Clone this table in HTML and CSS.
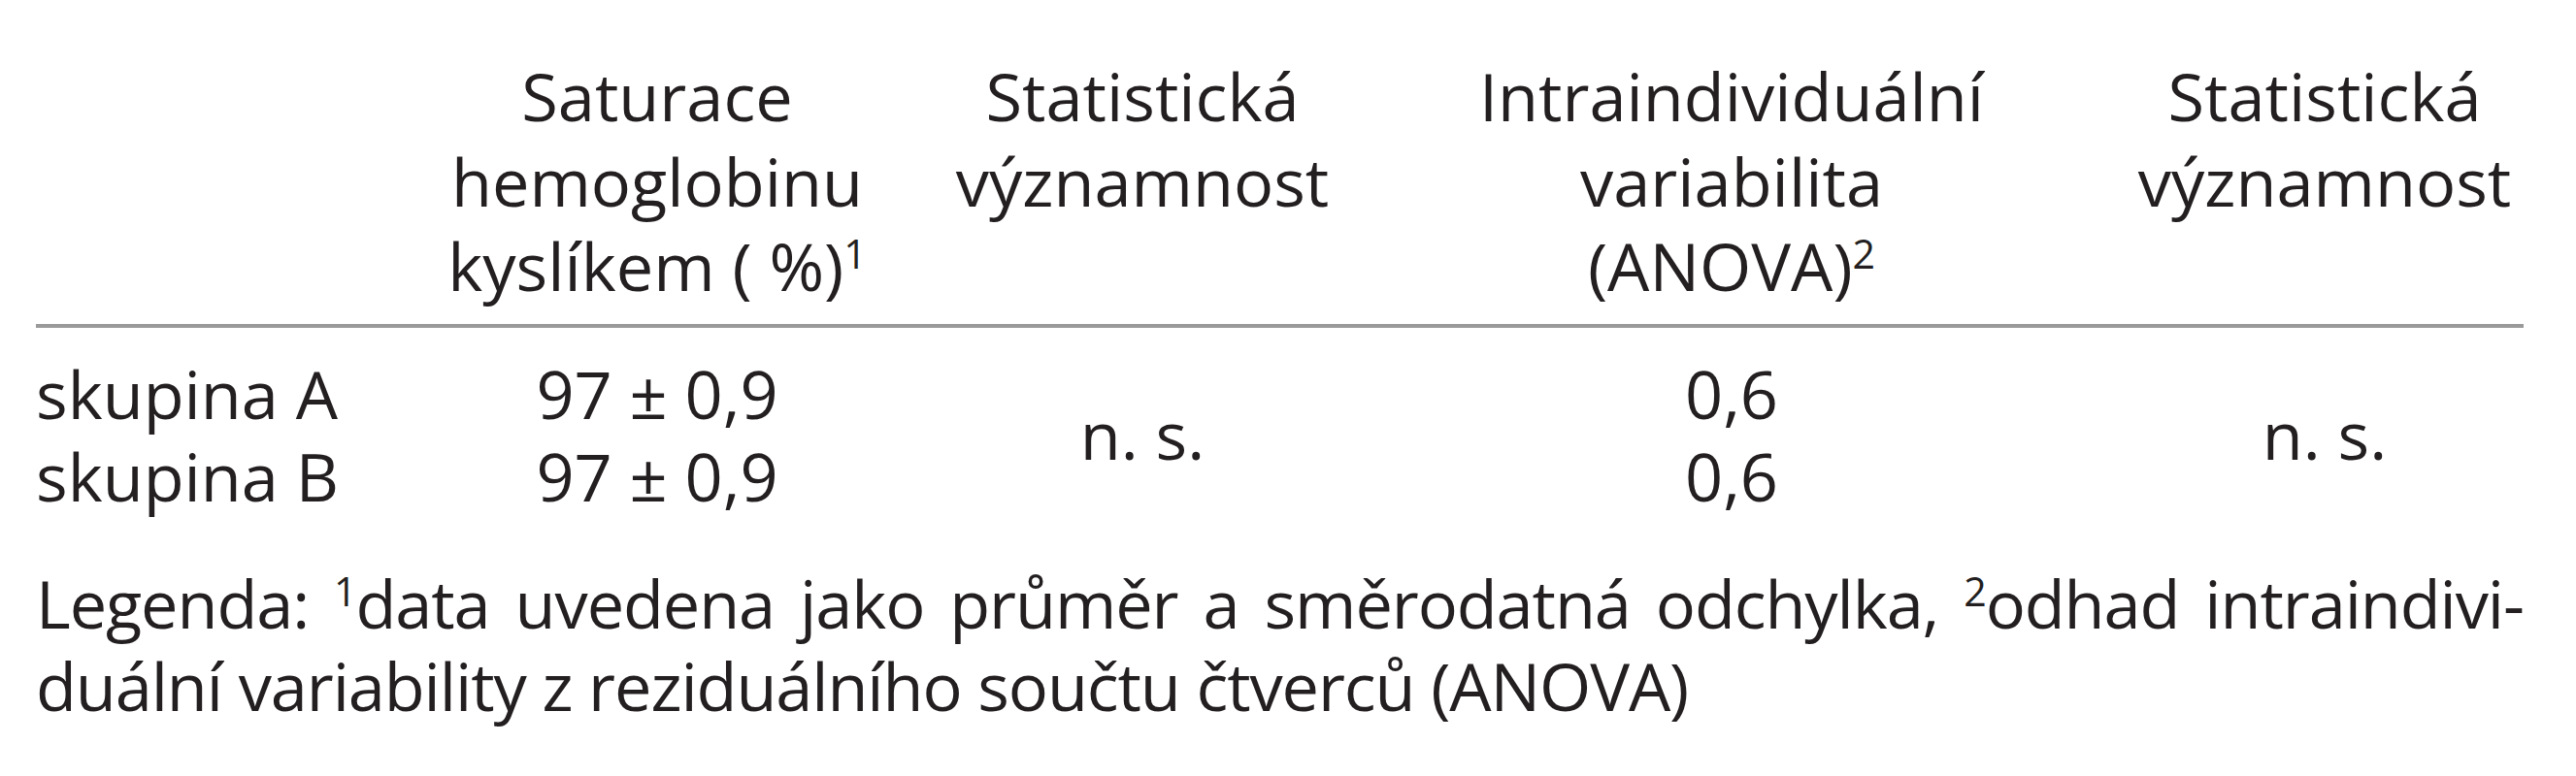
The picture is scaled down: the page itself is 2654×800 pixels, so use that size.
FILE: index.html
```html
<!DOCTYPE html>
<html lang="cs">
<head>
<meta charset="utf-8">
<link rel="stylesheet" href="styles.css">
</head>
<body>
<div class="page">
  <div class="table">
    <div class="thead">
      <div class="th"></div>
      <div class="th">Saturace<br>hemoglobinu<br>kyslíkem (&nbsp;%)<sup>1</sup></div>
      <div class="th">Statistická<br>významnost</div>
      <div class="th">Intraindividuální<br>variabilita<br>(ANOVA)<sup>2</sup></div>
      <div class="th">Statistická<br>významnost</div>
    </div>
    <div class="tbody">
      <div class="td label r1">skupina A</div>
      <div class="td c2 r1">97 ± 0,9</div>
      <div class="td c3 span">n. s.</div>
      <div class="td c4 r1">0,6</div>
      <div class="td c5 span">n. s.</div>
      <div class="td label r2">skupina B</div>
      <div class="td c2 r2">97 ± 0,9</div>
      <div class="td c4 r2">0,6</div>
    </div>
  </div>
  <div class="legend">
    <div class="legend-line justify">Legenda: <sup>1</sup>data uvedena jako průměr a směrodatná odchylka, <sup>2</sup>odhad intraindivi-</div>
    <div class="legend-line">duální variability z reziduálního součtu čtverců (ANOVA)</div>
  </div>
</div>
</body>
</html>
```
FILE: styles.css
```css
html, body {
  margin: 0;
  padding: 0;
  background: #ffffff;
}

body {
  font-family: "Open Sans", "Noto Sans", sans-serif;
  font-size: 68.5px;
  color: #231f20;
}

.page {
  width: 2563px;
  padding: 55px 0 0 37px;
}

.table {
  display: flex;
  flex-direction: column;
}

.thead,
.tbody {
  display: grid;
  grid-template-columns: 341px 598px 402px 812px 410px;
}

.thead {
  padding-bottom: 16px;
  border-bottom: 4px solid #9a9a9a;
}

.th {
  text-align: center;
  line-height: 87.5px;
  font-weight: 400;
  white-space: nowrap;
}

.tbody {
  padding-top: 25px;
  grid-template-rows: 85px 85px;
}

.td {
  line-height: 85px;
  text-align: center;
  white-space: nowrap;
}

.td.label {
  text-align: left;
  grid-column: 1;
}

.r1 { grid-row: 1; }
.r2 { grid-row: 2; }
.c2 { grid-column: 2; }
.c3 { grid-column: 3; }
.c4 { grid-column: 4; }
.c5 { grid-column: 5; }

.td.span {
  grid-row: 1 / span 2;
  align-self: center;
}

sup {
  font-size: 0.6em;
  line-height: 0;
  vertical-align: 23px;
}

.legend {
  margin-top: 46px;
}

.legend-line {
  line-height: 85px;
  letter-spacing: -1.1px;
  white-space: nowrap;
}

.legend-line.justify {
  text-align: justify;
  text-align-last: justify;
  white-space: normal;
}
```
